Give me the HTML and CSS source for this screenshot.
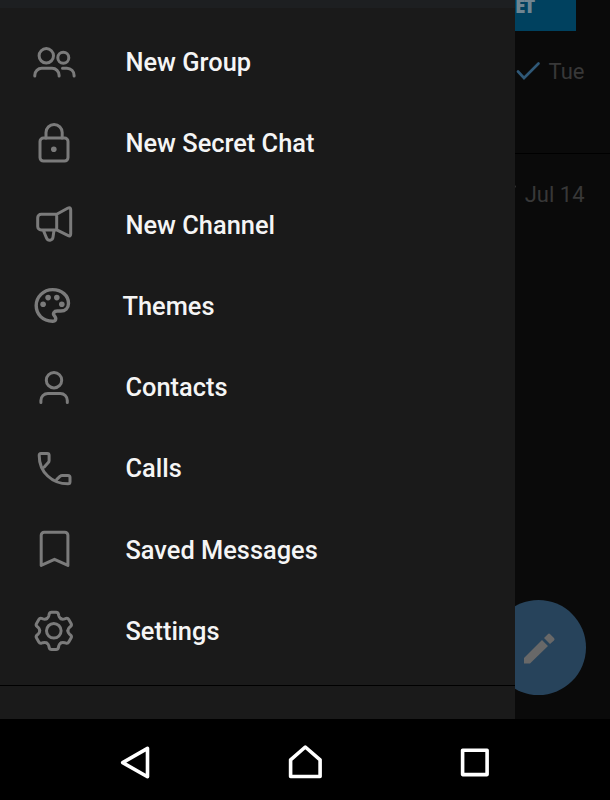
FILE: index.html
```
<!DOCTYPE html>
<html lang="en">
<head>
<meta charset="UTF-8">
<meta name="viewport" content="width=device-width, initial-scale=1.0">
<title>Menu</title>
<link rel="stylesheet" href="styles.css">
</head>
<body>
<div class="app">
<nav class="drawer">
<div class="drawer-header"></div>
<ul class="menu">
<li class="item">
<svg viewBox="0 0 60 60"><circle cx="22.3" cy="22.8" r="7.2"/><circle cx="39.3" cy="24.8" r="5.5"/><path d="M10.8 43v-.7a7 7 0 0 1 7-7h10.3a7 7 0 0 1 7 7v.7M38.500 35.200h4.400a7.200 7.200 0 0 1 7.200 7.200v.6"/></svg>
<span>New Group</span>
</li>
<li class="item">
<svg viewBox="0 0 60 60"><rect x="16" y="24.1" width="28" height="23" rx="3.5"/><path d="M22 24v-5.4a8.1 8.1 0 0 1 16.2 0V24"/><circle class="dot" cx="29.8" cy="35.2" r="2.8"/></svg>
<span>New Secret Chat</span>
</li>
<li class="item">
<svg viewBox="0 0 60 60"><path d="M32.7 19.2H17.2a3.5 3.5 0 0 0-3.5 3.5v8.7a3.5 3.5 0 0 0 3.5 3.5h15.5zL43.6 13.3Q46.700 11.600 46.700 14.700V39Q46.700 42 43.800 40.400L32.7 34.9M19.4 35.5l3.2 7.6c1.4 3.2 6 2.6 6.4-.9l1-6.7"/></svg>
<span>New Channel</span>
</li>
<li class="item themes">
<svg viewBox="0 0 60 60"><path class="thick" d="M28.6 45.200C18.6 45.200 12.2 38.200 12.2 29.6S19.4 13.600 28.6 13.600 44.500 19.7 44.500 27.3C44.500 32 41.2 35 36.8 35H33.2C30 35 28.500 37.6 30.300 39.6 33 42.6 31.6 45.200 28.6 45.200z"/><circle class="dot" cx="19.1" cy="28.3" r="2.8"/><circle class="dot" cx="24.1" cy="21.6" r="2.8"/><circle class="dot" cx="32.8" cy="21.6" r="2.8"/><circle class="dot" cx="37.8" cy="28.3" r="2.8"/></svg>
<span>Themes</span>
</li>
<li class="item">
<svg viewBox="0 0 60 60"><circle cx="30" cy="22.2" r="7.7"/><path d="M16.9 44.600v-2.2a7 7 0 0 1 7-7h12.4a7 7 0 0 1 7 7v2.2"/></svg>
<span>Contacts</span>
</li>
<li class="item">
<svg viewBox="0 0 60 60"><path d="M17 14.4h6.2q1.9 0 1.9 1.9v5.2q0 1.2-.8 2.1l-4 4.400M32.8 40.4l3.4-3.2q.8-.8 2-.8h5.8q2 0 2 2V42.800q0 2-2 2C28.3 44.800 15.2 33.5 15.2 16.4q0-2 1.8-2"/></svg>
<span>Calls</span>
</li>
<li class="item">
<svg viewBox="0 0 60 60"><path d="M17.2 45.4V15.2a3 3 0 0 1 3-3h20.7a3 3 0 0 1 3 3v30.2L30.5 39.3z"/></svg>
<span>Saved Messages</span>
</li>
<li class="item">
<svg viewBox="0 0 60 60">
<defs><path id="tooth" d="M-7-12.2Q-5.4-13.1-4.9-15.3L-4.6-16.8Q-4.2-18.600-2.3-18.600H2.3Q4.2-18.600 4.6-16.8L4.9-15.3Q5.4-13.1 7-12.2"/></defs>
<g transform="translate(29.8 29.8)">
<circle r="7.3"/>
<use href="#tooth"/><use href="#tooth" transform="rotate(60)"/><use href="#tooth" transform="rotate(120)"/><use href="#tooth" transform="rotate(180)"/><use href="#tooth" transform="rotate(240)"/><use href="#tooth" transform="rotate(300)"/>
</g>
</svg>
<span>Settings</span>
</li>
</ul>
</nav>
<div class="chats">
<div class="chat first">
<div class="banner">ET</div>
<div class="meta">
<svg class="check" viewBox="0 0 24 20"><path d="M2 10.500L8 17 22.500 2.500"/></svg>
<span>Tue</span>
</div>
</div>
<div class="chat">
<div class="meta">
<svg class="check read" viewBox="0 0 24 20"><path d="M2 10.500L8 17 22.500 2.500"/></svg>
<span>Jul 14</span>
</div>
</div>
<div class="fab">
<svg viewBox="0 0 36 36"><path d="M3 33.500v-5.500L21 10l6 6L9 33.500zM23 8L26.800 4.200q1.200-1.200 2.400 0L33 8q1.200 1.200 0 2.400L29 14z"/></svg>
</div>
</div>
</div>
<div class="navbar">
<svg viewBox="0 0 60 60"><path d="M17.700 32.600L42.500 18.400V46.700z"/></svg>
<svg viewBox="0 0 60 60"><path d="M30.300 17L15.600 29.800V46.500H45.100V29.800z"/></svg>
<svg viewBox="0 0 60 60"><path d="M17.6 20.300H42.100V44.600H17.6z"/></svg>
</div>
</body>
</html>
```
FILE: styles.css
```
* {box-sizing: border-box;margin: 0;padding: 0;}
body {width: 610px;height: 800px;background: #000;color: #f5f5f5;font-family: Roboto, sans-serif;overflow: hidden;display: flex;flex-direction: column;}
svg {display: block;fill: none;flex-shrink: 0;}

.app {height: 719px;display: flex;}
.drawer {width: 515px;background: #1a1a1a;}
.drawer-header {height: 8px;background: #1d1f21;}
.menu {list-style: none;padding: 14px 0 13px 24px;height: 678px;border-bottom: 1px solid #000;}
.item {height: 81.25px;display: flex;align-items: center;gap: 41.5px;font-size: 25.4px;font-weight: 500;white-space: nowrap;}
.item span {padding-bottom: 1px;}
.item svg {width: 60px;height: 60px;stroke: #7b7b7b;stroke-width: 3;stroke-linecap: round;stroke-linejoin: round;}
.item svg .thick {stroke-width: 3.4;}
.item svg .dot {fill: #7b7b7b;stroke: none;}
.themes {gap: 38.5px;}

.chats {position: relative;width: 95px;background: #0a0a0a;overflow: hidden;}
.chat {height: 123px;padding-right: 25.5px;}
.first {height: 154px;border-bottom: 1px solid #000;}
.banner {width: 61px;height: 31px;background: #00415f;color: #6f8591;font-family: "Open Sans", sans-serif;font-size: 19px;font-weight: 800;line-height: 13px;letter-spacing: -1.5px;}
.meta {display: flex;justify-content: flex-end;align-items: center;gap: 9px;height: 80px;color: #383838;font-size: 22px;white-space: nowrap;}
.check {width: 24px;height: 20px;stroke: #2f5877;stroke-width: 2.6;stroke-linecap: round;}
.read {stroke: #383838;}
.fab {position: absolute;left: -24px;top: 600px;width: 95px;height: 95px;border-radius: 50%;background: #27435b;display: flex;align-items: center;justify-content: center;}
.fab svg {width: 36px;height: 36px;fill: #686868;}

.navbar {height: 81px;display: flex;justify-content: center;align-items: center;gap: 110px;}
.navbar svg {width: 60px;height: 60px;stroke: #fff;stroke-width: 3.6;stroke-linejoin: round;}
```
